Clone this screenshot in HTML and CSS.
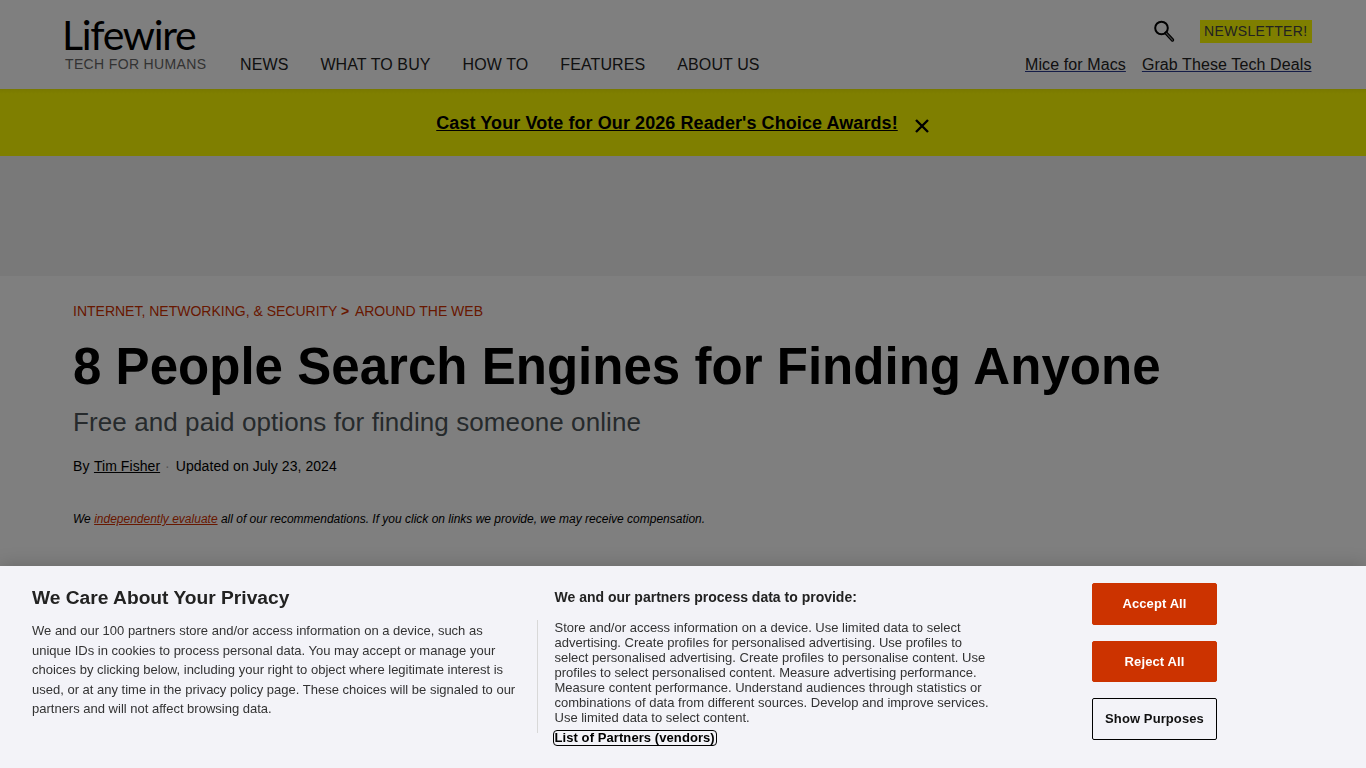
FILE: index.html
```html
<!DOCTYPE html>
<html lang="en">

<head>
    <meta charset="UTF-8">
    <meta name="viewport" content="width=device-width, initial-scale=1.0">
    <title>8 People Search Engines for Finding Anyone</title>
    <link rel="stylesheet" href="styles.css">
</head>

<body>

    <header class="site-header">
        <div class="brand">
            <a class="logo" href="#">Lifewire</a>
            <div class="tagline">TECH FOR HUMANS</div>
        </div>
        <nav class="main-nav">
            <a href="#">NEWS</a>
            <a href="#">WHAT TO BUY</a>
            <a href="#">HOW TO</a>
            <a href="#">FEATURES</a>
            <a href="#">ABOUT US</a>
        </nav>
        <div class="header-right">
            <div class="header-tools">
                <svg class="search-icon" width="22" height="24" viewBox="0 0 22 24" fill="none" stroke="#000">
                    <circle cx="8.5" cy="9" r="6.3" stroke-width="2"></circle>
                    <path d="M13 14l6.5 7" stroke-width="3.4" stroke-linecap="round"></path>
                    <path d="M13.4 14.4l6 6.6" stroke="#808080" stroke-width="1.2" stroke-linecap="round"></path>
                </svg>
                <a class="newsletter" href="#">NEWSLETTER!</a>
            </div>
            <div class="header-links">
                <a href="#">Mice for Macs</a>
                <a href="#">Grab These Tech Deals</a>
            </div>
        </div>
    </header>

    <div class="promo-bar">
        <a href="#">Cast Your Vote for Our 2026 Reader's Choice Awards!</a>
        <svg class="promo-close" width="16" height="16" viewBox="0 0 16 16" stroke="#000" stroke-width="2.4">
            <path d="M2 2l12 12M14 2L2 14"></path>
        </svg>
    </div>

    <div class="ad-slot"></div>

    <main class="article">
        <div class="breadcrumb">
            <a href="#">INTERNET, NETWORKING, &amp; SECURITY</a>
            <span class="crumb-sep">&gt;</span>
            <a href="#">AROUND THE WEB</a>
        </div>
        <h1>8 People Search Engines for Finding Anyone</h1>
        <h2>Free and paid options for finding someone online</h2>
        <div class="byline">
            By <a href="#">Tim Fisher</a>
            <span class="dot">·</span>
            Updated on July 23, 2024
        </div>
        <p class="disclosure">We <a href="#">independently evaluate</a> all of our recommendations. If you click on links we provide, we may receive compensation.</p>
    </main>

    <div class="overlay"></div>

    <section class="cookie-banner">
        <div class="cookie-policy">
            <h3>We Care About Your Privacy</h3>
            <p>We and our 100 partners store and/or access information on a device, such as unique IDs in cookies to process personal data. You may accept or manage your choices by clicking below, including your right to object where legitimate interest is used, or at any time in the privacy policy page. These choices will be signaled to our partners and will not affect browsing data.</p>
        </div>
        <div class="cookie-purposes">
            <h4>We and our partners process data to provide:</h4>
            <p>Store and/or access information on a device. Use limited data to select advertising. Create profiles for personalised advertising. Use profiles to select personalised advertising. Create profiles to personalise content. Use profiles to select personalised content. Measure advertising performance. Measure content performance. Understand audiences through statistics or combinations of data from different sources. Develop and improve services. Use limited data to select content.</p>
            <a class="vendors" href="#">List of Partners (vendors)</a>
        </div>
        <div class="cookie-actions">
            <button class="btn-solid">Accept All</button>
            <button class="btn-solid btn-reject">Reject All</button>
            <button class="btn-outline">Show Purposes</button>
        </div>
    </section>

</body>

</html>
```

FILE: styles.css
```css
body,
html {
    margin: 0;
    padding: 0;
    height: 100%;
    font-family: "Liberation Sans", Arial, sans-serif;
    background-color: #fff;
    overflow: hidden;
}

a {
    color: inherit;
}

.site-header {
    height: 89px;
    box-sizing: border-box;
    padding: 0 54.5px 0 64px;
    display: flex;
    align-items: flex-end;
}

.brand {
    width: 176px;
    padding-bottom: 17px;
}

.logo {
    display: block;
    height: 38px;
    margin-left: -2px;
    font-family: Lato, sans-serif;
    font-size: 41px;
    line-height: 34px;
    letter-spacing: -1.3px;
    color: #000;
    text-decoration: none;
    white-space: nowrap;
}

.tagline {
    margin-left: 1px;
    font-size: 14px;
    line-height: 16px;
    letter-spacing: 0.35px;
    color: #666;
}

.main-nav {
    display: flex;
    gap: 32px;
    padding-bottom: 15px;
    font-size: 16px;
    line-height: 18px;
    letter-spacing: 0.1px;
    color: #222;
}

.main-nav a {
    text-decoration: none;
}

.header-right {
    margin-left: auto;
    padding-bottom: 15px;
    display: flex;
    flex-direction: column;
    align-items: flex-end;
}

.header-tools {
    display: flex;
    align-items: center;
    gap: 25px;
    margin-bottom: 13px;
    margin-right: -0.5px;
}

.search-icon {
    display: block;
}

.newsletter {
    display: block;
    padding: 0 4.5px;
    background-color: #ffff00;
    font-size: 14px;
    line-height: 23px;
    color: #444;
    text-decoration: none;
    letter-spacing: 0.35px;
}

.header-links {
    display: flex;
    gap: 16px;
    font-size: 16px;
    line-height: 18px;
    letter-spacing: 0.1px;
    color: #222;
}

.header-links a {
    text-decoration-color: #2b3a8f;
}

.promo-bar {
    height: 67px;
    padding-top: 1px;
    box-sizing: border-box;
    background: linear-gradient(#f2f200, #ffff00 5px);
    display: flex;
    align-items: center;
    justify-content: center;
    gap: 16px;
    font-size: 18px;
    font-weight: bold;
    letter-spacing: 0.08px;
    color: #000;
}

.promo-close {
    margin-top: 5px;
}

.ad-slot {
    height: 120px;
    background-color: #f3f3f3;
}

.article {
    padding: 27px 73px 0;
    color: #000;
}

.breadcrumb {
    font-size: 14px;
    line-height: 16px;
    color: #d03000;
}

.breadcrumb a {
    text-decoration: none;
}

.crumb-sep {
    font-weight: bold;
    margin: 0 2.5px 0 0;
}

h1 {
    margin: 17px 0 0;
    font-size: 51px;
    line-height: 62px;
    letter-spacing: 0.03px;
    font-weight: bold;
}

h2 {
    margin: 8px 0 0;
    font-size: 26px;
    line-height: 32px;
    font-weight: normal;
    letter-spacing: 0.09px;
    color: #4c5458;
}

.byline {
    margin-top: 20px;
    font-size: 14px;
    line-height: 16px;
    letter-spacing: 0.06px;
}

.byline a {
    margin: 0 -1px 0 0.5px;
}

.dot {
    color: #aaa;
    margin: 0 2px;
}

.disclosure {
    margin: 38px 0 0;
    font-size: 12px;
    line-height: 14px;
    font-style: italic;
}

.disclosure a {
    color: #d03000;
}

.overlay {
    position: fixed;
    top: 0;
    left: 0;
    right: 0;
    bottom: 0;
    background-color: rgba(0, 0, 0, 0.5);
}

.cookie-banner {
    position: fixed;
    left: 0;
    right: 0;
    bottom: 0;
    height: 202px;
    box-sizing: border-box;
    background-color: #f3f3f8;
    box-shadow: 0 0 18px rgba(0, 0, 0, 0.2);
    display: flex;
    color: #222;
}

.cookie-policy {
    width: 505px;
    margin-left: 32px;
    padding-top: 21px;
}

.cookie-policy h3 {
    margin: 0;
    font-size: 19.2px;
    line-height: 22px;
    color: #222;
}

.cookie-policy p {
    margin: 12px 0 0;
    max-width: 486px;
    font-size: 13px;
    line-height: 19.5px;
    color: #333;
}

.cookie-purposes {
    position: relative;
    width: 435.5px;
    padding: 24px 0 0 17.5px;
}

.cookie-purposes::before {
    content: "";
    position: absolute;
    left: 0;
    top: 54px;
    height: 113px;
    border-left: 1px solid #d8d8d8;
}

.cookie-purposes h4 {
    margin: 0;
    font-size: 14px;
    line-height: 15px;
    color: #222;
}

.cookie-purposes p {
    margin: 15px 0 0;
    font-size: 13px;
    line-height: 15px;
    color: #333;
}

.vendors {
    display: inline-block;
    margin-top: 6px;
    margin-left: -1px;
    padding: 0 1px;
    font-size: 13px;
    line-height: 14px;
    font-weight: bold;
    letter-spacing: 0.08px;
    color: #000;
    text-decoration: none;
    outline: 1.5px solid #000;
    border-radius: 3px;
}

.cookie-actions {
    margin-left: 102px;
    padding-top: 17px;
    display: flex;
    flex-direction: column;
    gap: 16px;
}

.cookie-actions button {
    width: 125px;
    height: 42px;
    padding: 0 0 2px;
    font-family: "Liberation Sans", Arial, sans-serif;
    font-size: 13px;
    font-weight: bold;
    letter-spacing: 0.1px;
    border-radius: 2px;
    box-sizing: border-box;
}

.cookie-actions .btn-reject {
    height: 41px;
    padding-bottom: 0;
}

.btn-solid {
    background-color: #cc3300;
    border: 1px solid #cc3300;
    color: #fff;
}

.btn-outline {
    background-color: #f3f3f8;
    border: 1px solid #000;
    color: #111;
}
```
